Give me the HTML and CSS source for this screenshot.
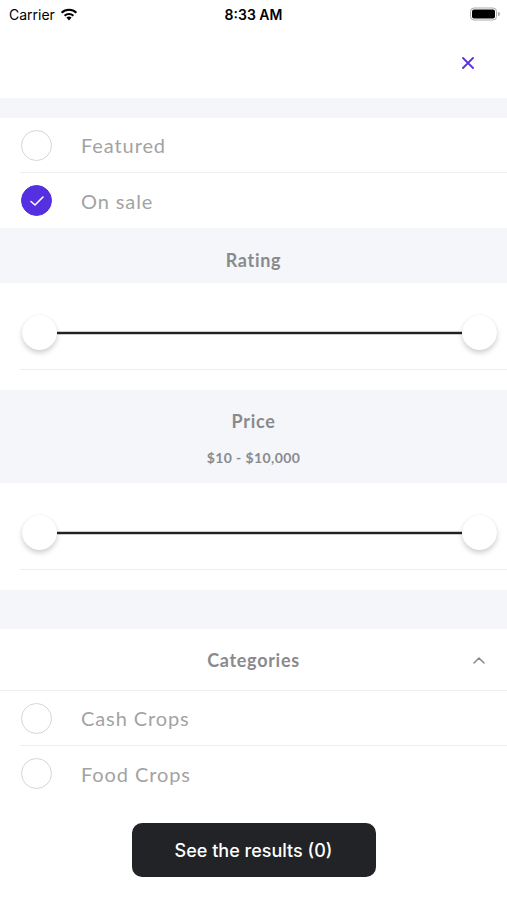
FILE: index.html
```html
<!DOCTYPE html>
<html>
  <head>
    <title>Filters</title>
    <meta charset="utf-8" />
    <link rel="stylesheet" href="styles.css">
  </head>
  <body>
    <div class="status">
      <div class="carrier">Carrier
        <svg class="wifi" width="18" height="13" viewBox="0 0 18 13">
          <path d="M9 12.5 L6.4 9.6 A3.8 3.8 0 0 1 11.6 9.6 Z" fill="#000"/>
          <path d="M4.6 7.8 A6.4 6.4 0 0 1 13.4 7.8" stroke="#000" stroke-width="2.1" fill="none"/>
          <path d="M1.6 4.7 A10.6 10.6 0 0 1 16.4 4.7" stroke="#000" stroke-width="2.1" fill="none"/>
        </svg>
      </div>
      <div class="time">8:33 AM</div>
      <div class="battery">
        <svg width="30" height="14" viewBox="0 0 30 14">
          <rect x="0.5" y="1" width="26" height="12" rx="3.5" fill="none" stroke="#aaa"/>
          <rect x="2" y="2.5" width="23" height="9" rx="2" fill="#000"/>
          <path d="M28 5 v4 a2 2 0 0 0 0 -4z" fill="#aaa"/>
        </svg>
      </div>
    </div>

    <div class="topbar">
      <svg class="close" width="12" height="12" viewBox="0 0 12 12">
        <path d="M1 1 L11 11 M11 1 L1 11" stroke="#5b33dc" stroke-width="1.8" stroke-linecap="round"/>
      </svg>
    </div>

    <div class="band small"></div>

    <div class="option">
      <span class="radio"></span>
      <span class="label">Featured</span>
    </div>
    <div class="option last">
      <span class="radio checked">
        <svg width="16" height="12" viewBox="0 0 16 12">
          <path d="M2 6.5 L6 10 L14 2" stroke="#fff" stroke-width="1.6" fill="none" stroke-linecap="round" stroke-linejoin="round"/>
        </svg>
      </span>
      <span class="label">On sale</span>
    </div>

    <div class="section-head rating">
      <div class="title">Rating</div>
    </div>

    <div class="slider-row">
      <div class="slider">
        <span class="thumb"></span>
        <span class="track"></span>
        <span class="thumb"></span>
      </div>
    </div>

    <div class="gap"></div>

    <div class="section-head price">
      <div class="title">Price</div>
      <div class="range">$10 - $10,000</div>
    </div>

    <div class="slider-row">
      <div class="slider">
        <span class="thumb"></span>
        <span class="track"></span>
        <span class="thumb"></span>
      </div>
    </div>

    <div class="gap"></div>
    <div class="band big"></div>

    <div class="cat-head">
      <div class="title">Categories</div>
      <svg class="chevron" width="14" height="8" viewBox="0 0 14 8">
        <path d="M2 7 L7 2 L12 7" stroke="#888" stroke-width="1.5" fill="none" stroke-linecap="round" stroke-linejoin="round"/>
      </svg>
    </div>

    <div class="option">
      <span class="radio"></span>
      <span class="label">Cash Crops</span>
    </div>
    <div class="option last">
      <span class="radio"></span>
      <span class="label">Food Crops</span>
    </div>

    <div class="footer">
      <button class="results">See the results (0)</button>
    </div>
  </body>
</html>
```

FILE: styles.css
```css
body {
  margin: 0;
  background: #fff;
  font-family: "Lato", "Open Sans", sans-serif;
  color: #999;
}
.status {
  height: 28px;
  display: flex;
  align-items: center;
  justify-content: space-between;
  padding: 0 7px 0 9px;
  font-family: "Inter", "Liberation Sans", sans-serif;
  color: #000;
  font-size: 14px;
  position: relative;
}
.carrier {
  display: flex;
  align-items: center;
  gap: 5px;
  font-size: 14px;
}
.time {
  position: absolute;
  left: 0;
  right: 0;
  text-align: center;
  font-weight: 600;
  font-size: 14px;
}
.battery {
  display: flex;
  align-items: center;
}
.topbar {
  height: 70px;
  display: flex;
  align-items: center;
  justify-content: flex-end;
  padding-right: 33px;
}
.band {
  background: #f4f6f9;
}
.band.small {
  height: 20px;
}
.band.big {
  height: 39px;
}
.option {
  height: 54px;
  margin-left: 20px;
  display: flex;
  align-items: center;
  border-bottom: 1px solid #eceef1;
}
.option.last {
  border-bottom: none;
  height: 55px;
}
.radio {
  width: 29px;
  height: 29px;
  margin-left: 1px;
  border: 1.5px solid #d6d6d6;
  border-radius: 50%;
  display: flex;
  align-items: center;
  justify-content: center;
  flex: none;
}
.radio.checked {
  background: #5530e0;
  border-color: #5530e0;
}
.label {
  margin-left: 29px;
  font-size: 20px;
  color: #a3a3a3;
  letter-spacing: 0.9px;
}
.section-head {
  background: #f4f6f9;
  display: flex;
  flex-direction: column;
  align-items: center;
  justify-content: center;
}
.section-head.rating {
  height: 55px;
  padding-top: 8px;
  box-sizing: border-box;
}
.section-head.price {
  height: 93px;
  gap: 17px;
  padding-top: 2px;
  box-sizing: border-box;
}
.title {
  font-size: 18px;
  font-weight: 700;
  color: #8a8a8e;
  letter-spacing: 0.7px;
}
.range {
  font-size: 14px;
  font-weight: 700;
  color: #8a8a8e;
  letter-spacing: 0.4px;
}
.slider-row {
  margin-left: 20px;
  height: 87px;
  border-bottom: 1px solid #eceef1;
  display: flex;
  align-items: flex-start;
  padding-top: 32px;
  box-sizing: border-box;
}
.slider {
  display: flex;
  align-items: center;
  width: 475px;
  margin-left: 2px;
}
.thumb {
  width: 35px;
  height: 35px;
  border-radius: 50%;
  background: #fff;
  box-shadow: 0 3px 5px rgba(0, 0, 0, 0.18), 0 0 1px rgba(0, 0, 0, 0.1);
  flex: none;
  position: relative;
  z-index: 1;
}
.track {
  flex: 1;
  height: 2px;
  background: #222;
  box-shadow: 0 0 0 0.5px #999;
}
.gap {
  height: 20px;
}
.cat-head {
  height: 61px;
  border-bottom: 1px solid #eceef1;
  display: flex;
  align-items: center;
  justify-content: center;
  position: relative;
}
.chevron {
  position: absolute;
  right: 21px;
  top: 27px;
}
.footer {
  display: flex;
  justify-content: center;
  padding-top: 22px;
}
.results {
  width: 244px;
  height: 54px;
  border: none;
  border-radius: 10px;
  background: #222326;
  color: #fff;
  font-family: "Inter", "Liberation Sans", sans-serif;
  font-size: 18px;
  font-weight: 500;
}
```
